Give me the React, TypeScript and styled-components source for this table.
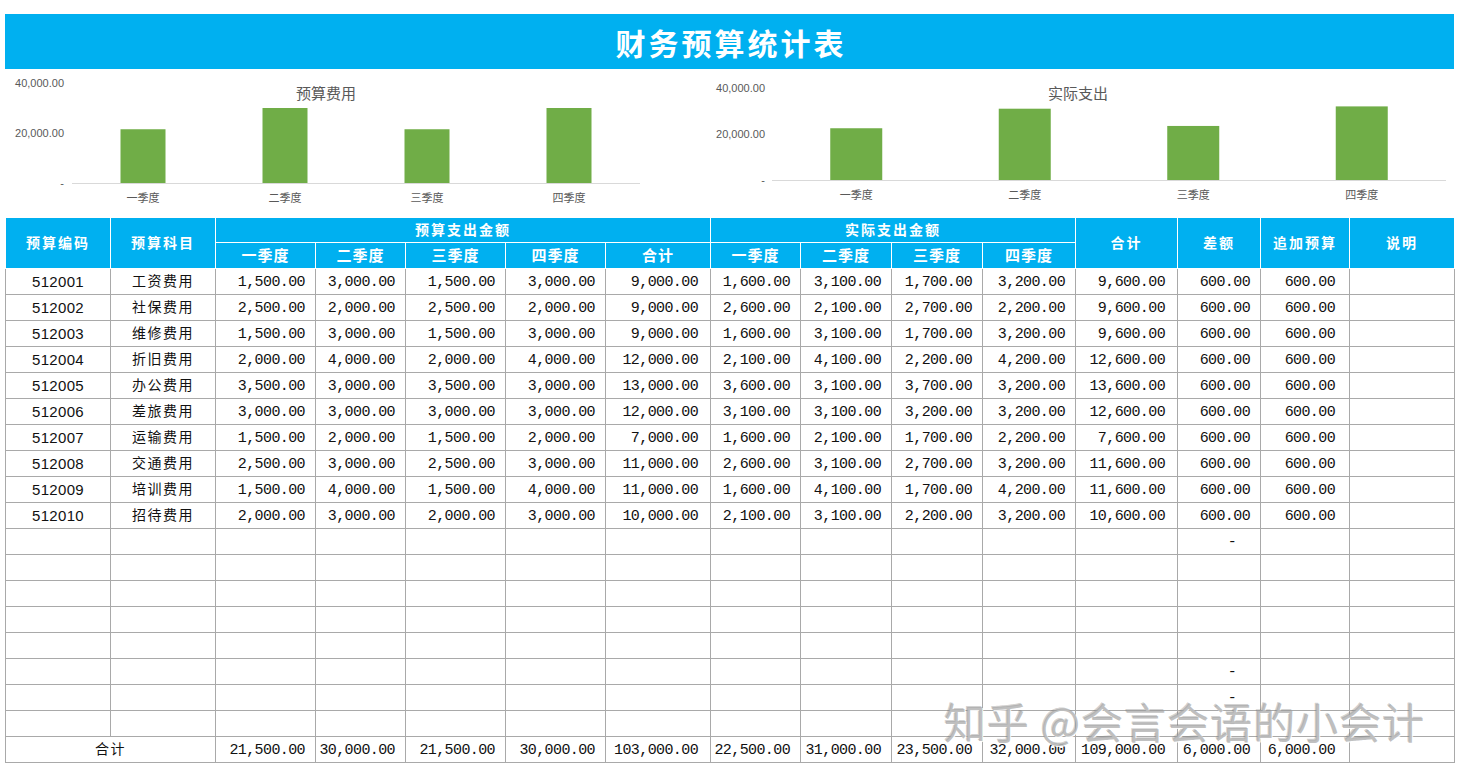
import React from 'react';
import styled, { createGlobalStyle } from 'styled-components';

const GlobalStyle = createGlobalStyle`
  html, body { margin: 0; padding: 0; background: #ffffff; }
  body { font-family: "Noto Sans CJK SC", "Liberation Sans", sans-serif; }
`;

const Page = styled.div`
  position: relative;
  width: 1449px;
  padding: 14px 0 0 5px;
`;

const TitleBar = styled.header`
  height: 55px;
  background: #00b0f0;
  display: flex;
  align-items: center;
  justify-content: center;
  padding-left: 3px;
  box-sizing: border-box;
  color: #ffffff;
  font-family: "Noto Sans CJK SC", sans-serif;
  font-weight: 700;
  font-size: 30px;
  letter-spacing: 3px;
`;

const ChartsRow = styled.section`
  display: flex;
  height: 148px;
`;

const ChartBox = styled.div<{ $w: number }>`
  width: ${(p) => p.$w}px;
  height: 148px;
  flex: none;
`;

const Table = styled.table`
  border-collapse: collapse;
  table-layout: fixed;
  width: 1449px;
`;

const HeadRow = styled.tr<{ $h: number }>`
  height: ${(p) => p.$h}px;
`;

const HeadCell = styled.th<{ $sub?: boolean }>`
  background: #00b0f0;
  color: #ffffff;
  font-family: "Noto Sans CJK SC", sans-serif;
  font-weight: 700;
  font-size: ${(p) => (p.$sub ? 15 : 14)}px;
  letter-spacing: ${(p) => (p.$sub ? 1 : 2)}px;
  border: 1px solid #ffffff;
  padding: 0 0 2px 0;
  line-height: 1;
  text-align: center;
  vertical-align: middle;
`;

const BodyRow = styled.tr`
  height: 26px;
`;

const NumCell = styled.td<{ $pr?: number }>`
  border: 1px solid #a9a9a9;
  padding: 1px ${(p) => p.$pr ?? 10}px 0 2px;
  text-align: right;
  vertical-align: middle;
  font-family: "Liberation Mono", "Noto Sans CJK SC", monospace;
  font-size: 15px;
  letter-spacing: -0.6px;
  line-height: 1;
  color: #111111;
  white-space: nowrap;
  overflow: hidden;
`;

const TextCell = styled.td<{ $spaced?: boolean }>`
  border: 1px solid #a9a9a9;
  padding: 0 0 ${(p) => (p.$spaced ? 3 : 0)}px 0;
  text-align: center;
  vertical-align: middle;
  font-family: ${(p) => (p.$spaced ? '"Noto Sans CJK SC", sans-serif' : '"Liberation Sans", "Noto Sans CJK SC", sans-serif')};
  font-size: ${(p) => (p.$spaced ? 14 : 15)}px;
  letter-spacing: ${(p) => (p.$spaced ? 1.5 : 0.3)}px;
  line-height: 1;
  color: #111111;
  white-space: nowrap;
`;

const Watermark = styled.div`
  position: absolute;
  left: 944px;
  top: 697px;
  font-family: "Noto Sans CJK SC", sans-serif;
  font-size: 42px;
  letter-spacing: 1px;
  line-height: 48px;
  font-weight: 400;
  color: rgba(165, 165, 165, 0.7);
  text-shadow: 1px 1px 0 rgba(255, 255, 255, 0.9), -1px -1px 0 rgba(100, 100, 100, 0.3);
  white-space: nowrap;
  pointer-events: none;
`;

type ChartCfg = {
  width: number;
  title: string;
  titleX: number;
  labelRight: number;
  ticks: { label: string; y: number }[];
  axisY: number;
  x0: number;
  x1: number;
  barW: number;
  perUnit: number;
  values: number[];
  catY: number;
};

const cats = ['一季度', '二季度', '三季度', '四季度'];

const BarChart: React.FC<{ cfg: ChartCfg }> = ({ cfg }) => {
  const step = (cfg.x1 - cfg.x0) / 4;
  return (
    <ChartBox $w={cfg.width}>
      <svg width={cfg.width} height={148} viewBox={`0 0 ${cfg.width} 148`}>
        <text
          x={cfg.titleX}
          y={23}
          textAnchor="middle"
          dominantBaseline="central"
          fontFamily='"Noto Sans CJK SC", sans-serif'
          fontSize={15}
          fill="#595959"
        >
          {cfg.title}
        </text>
        {cfg.ticks.map((t) => (
          <text
            key={t.label}
            x={cfg.labelRight}
            y={t.y}
            textAnchor="end"
            dominantBaseline="central"
            fontFamily='"Liberation Sans", sans-serif'
            fontSize={11}
            fill="#595959"
          >
            {t.label}
          </text>
        ))}
        {cfg.values.map((v, i) => {
          const cx = cfg.x0 + step * (i + 0.5);
          const h = v * cfg.perUnit;
          return (
            <rect key={i} x={cx - cfg.barW / 2} y={cfg.axisY - h} width={cfg.barW} height={h} fill="#70ad47" />
          );
        })}
        <line x1={cfg.x0} x2={cfg.x1} y1={cfg.axisY + 0.5} y2={cfg.axisY + 0.5} stroke="#d9d9d9" strokeWidth={1} />
        {cats.map((c, i) => (
          <text
            key={c}
            x={cfg.x0 + step * (i + 0.5)}
            y={cfg.catY}
            textAnchor="middle"
            dominantBaseline="central"
            fontFamily='"Noto Sans CJK SC", sans-serif'
            fontSize={11}
            fill="#595959"
          >
            {c}
          </text>
        ))}
      </svg>
    </ChartBox>
  );
};

const leftChart: ChartCfg = {
  width: 705,
  title: '预算费用',
  titleX: 321,
  labelRight: 59,
  ticks: [
    { label: '40,000.00', y: 14 },
    { label: '20,000.00', y: 64 },
    { label: '-', y: 114 },
  ],
  axisY: 114,
  x0: 67,
  x1: 635,
  barW: 45,
  perUnit: 50 / 20000,
  values: [21500, 30000, 21500, 30000],
  catY: 128,
};

const rightChart: ChartCfg = {
  width: 744,
  title: '实际支出',
  titleX: 368,
  labelRight: 55,
  ticks: [
    { label: '40,000.00', y: 19 },
    { label: '20,000.00', y: 65 },
    { label: '-', y: 111 },
  ],
  axisY: 111,
  x0: 62,
  x1: 736,
  barW: 52,
  perUnit: 46 / 20000,
  values: [22500, 31000, 23500, 32000],
  catY: 125,
};

type Row = { code: string; name: string; budget: number[]; actual: number[] };

const rows: Row[] = [
  { code: '512001', name: '工资费用', budget: [1500, 3000, 1500, 3000], actual: [1600, 3100, 1700, 3200] },
  { code: '512002', name: '社保费用', budget: [2500, 2000, 2500, 2000], actual: [2600, 2100, 2700, 2200] },
  { code: '512003', name: '维修费用', budget: [1500, 3000, 1500, 3000], actual: [1600, 3100, 1700, 3200] },
  { code: '512004', name: '折旧费用', budget: [2000, 4000, 2000, 4000], actual: [2100, 4100, 2200, 4200] },
  { code: '512005', name: '办公费用', budget: [3500, 3000, 3500, 3000], actual: [3600, 3100, 3700, 3200] },
  { code: '512006', name: '差旅费用', budget: [3000, 3000, 3000, 3000], actual: [3100, 3100, 3200, 3200] },
  { code: '512007', name: '运输费用', budget: [1500, 2000, 1500, 2000], actual: [1600, 2100, 1700, 2200] },
  { code: '512008', name: '交通费用', budget: [2500, 3000, 2500, 3000], actual: [2600, 3100, 2700, 3200] },
  { code: '512009', name: '培训费用', budget: [1500, 4000, 1500, 4000], actual: [1600, 4100, 1700, 4200] },
  { code: '512010', name: '招待费用', budget: [2000, 3000, 2000, 3000], actual: [2100, 3100, 2200, 3200] },
];

const colWidths = [105, 105, 100, 90, 100, 100, 105, 90, 91, 91, 93, 102, 83, 89, 105];

const fmt = (n: number) => n.toLocaleString('en-US', { minimumFractionDigits: 2, maximumFractionDigits: 2 });
const sum = (a: number[]) => a.reduce((s, v) => s + v, 0);

const emptyDash = [true, false, false, false, false, true, true, true];

export default function App() {
  const bTot = [0, 1, 2, 3].map((i) => sum(rows.map((r) => r.budget[i])));
  const aTot = [0, 1, 2, 3].map((i) => sum(rows.map((r) => r.actual[i])));
  const diffTot = sum(rows.map((r) => sum(r.actual) - sum(r.budget)));
  return (
    <>
      <GlobalStyle />
      <Page>
        <TitleBar>财务预算统计表</TitleBar>
        <ChartsRow>
          <BarChart cfg={leftChart} />
          <BarChart cfg={rightChart} />
        </ChartsRow>
        <Table>
          <colgroup>
            {colWidths.map((w, i) => (
              <col key={i} style={{ width: w }} />
            ))}
          </colgroup>
          <thead>
            <HeadRow $h={25}>
              <HeadCell rowSpan={2}>预算编码</HeadCell>
              <HeadCell rowSpan={2}>预算科目</HeadCell>
              <HeadCell colSpan={5}>预算支出金额</HeadCell>
              <HeadCell colSpan={4}>实际支出金额</HeadCell>
              <HeadCell rowSpan={2}>合计</HeadCell>
              <HeadCell rowSpan={2}>差额</HeadCell>
              <HeadCell rowSpan={2}>追加预算</HeadCell>
              <HeadCell rowSpan={2}>说明</HeadCell>
            </HeadRow>
            <HeadRow $h={26}>
              {cats.map((c) => (
                <HeadCell $sub key={'b' + c}>{c}</HeadCell>
              ))}
              <HeadCell $sub>合计</HeadCell>
              {cats.map((c) => (
                <HeadCell $sub key={'a' + c}>{c}</HeadCell>
              ))}
            </HeadRow>
          </thead>
          <tbody>
            {rows.map((r) => {
              const bs = sum(r.budget);
              const as = sum(r.actual);
              return (
                <BodyRow key={r.code}>
                  <TextCell>{r.code}</TextCell>
                  <TextCell $spaced>{r.name}</TextCell>
                  {r.budget.map((v, i) => (
                    <NumCell key={'b' + i}>{fmt(v)}</NumCell>
                  ))}
                  <NumCell $pr={12}>{fmt(bs)}</NumCell>
                  {r.actual.map((v, i) => (
                    <NumCell key={'a' + i}>{fmt(v)}</NumCell>
                  ))}
                  <NumCell $pr={12}>{fmt(as)}</NumCell>
                  <NumCell>{fmt(as - bs)}</NumCell>
                  <NumCell $pr={14}>{fmt(as - bs)}</NumCell>
                  <NumCell />
                </BodyRow>
              );
            })}
            {emptyDash.map((d, k) => (
              <BodyRow key={'e' + k}>
                {colWidths.map((_, i) =>
                  i === 12 ? (
                    <NumCell key={i} $pr={24}>{d ? '-' : ''}</NumCell>
                  ) : (
                    <NumCell key={i} />
                  )
                )}
              </BodyRow>
            ))}
            <BodyRow>
              <TextCell $spaced colSpan={2}>合计</TextCell>
              {bTot.map((v, i) => (
                <NumCell key={'bt' + i}>{fmt(v)}</NumCell>
              ))}
              <NumCell $pr={12}>{fmt(sum(bTot))}</NumCell>
              {aTot.map((v, i) => (
                <NumCell key={'at' + i}>{fmt(v)}</NumCell>
              ))}
              <NumCell $pr={12}>{fmt(sum(aTot))}</NumCell>
              <NumCell>{fmt(diffTot)}</NumCell>
              <NumCell $pr={14}>{fmt(diffTot)}</NumCell>
              <NumCell />
            </BodyRow>
          </tbody>
        </Table>
        <Watermark>知乎 @会言会语的小会计</Watermark>
      </Page>
    </>
  );
}
